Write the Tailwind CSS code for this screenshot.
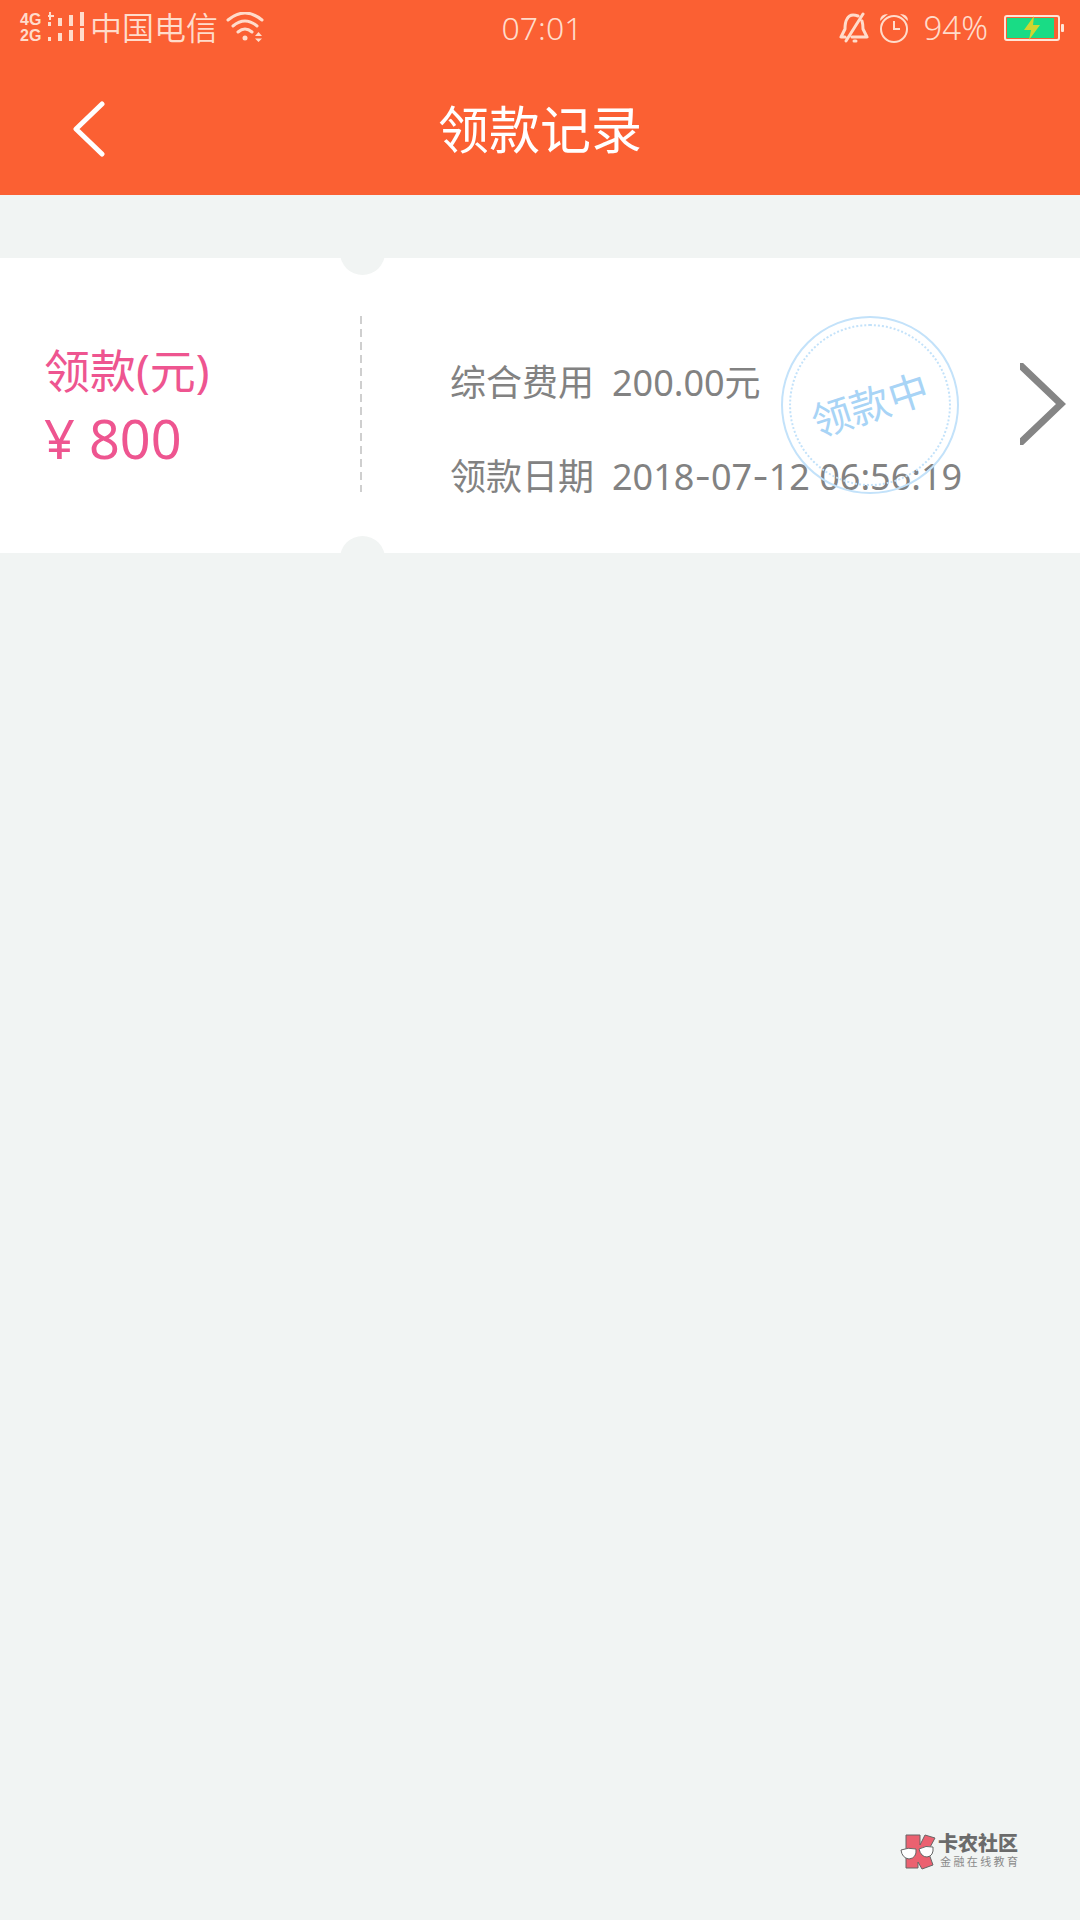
<!DOCTYPE html>
<html lang="zh-CN">
<head>
<meta charset="utf-8">
<meta name="viewport" content="width=device-width, initial-scale=1">
<title>领款记录</title>
<script src="https://cdn.jsdelivr.net/npm/@tailwindcss/browser@4"></script>
</head>
<body class="flex min-h-screen flex-col bg-[#f1f4f3] font-['Noto_Sans','Noto_Sans_CJK_SC',sans-serif]">
<header class="bg-[#fb6033] text-white">
  <!-- Status bar -->
  <div class="grid h-14 grid-cols-3 items-center pr-4 pl-5 font-[350] text-[#ffdccb]">
    <div class="flex items-center">
      <div class="flex w-7 flex-col font-['Liberation_Sans',sans-serif] text-base leading-4 font-bold">
        <span>4G</span><span>2G</span>
      </div>
      <svg class="h-8 w-9" viewBox="0 0 36 32" fill="currentColor" aria-hidden="true">
        <path d="M-2 3h3V0h2v3h3v2H3v3H1V5h-3zM-1 10h4v4h-4zM10 6h4v8h-4zM21 3h4v11h-4zM32 0h4v14h-4zM-1 25h4v4h-4zM10 21h4v8h-4zM21 18h4v11h-4zM32 16h4v13h-4z"/>
      </svg>
      <span class="ml-1.5 text-[32px] leading-10">中国电信</span>
      <svg class="ml-2 h-8 w-10" viewBox="0 0 40 32" fill="none" stroke="currentColor" stroke-width="3" stroke-linecap="round" aria-hidden="true">
        <path d="M2 8Q19-6 36 8M7 14Q19 4 31 14M12 20Q19 14 26 20"/>
        <circle cx="19" cy="26" r="2.500" fill="currentColor" stroke="none"/>
        <path d="M29 24l3.500-4 3.500 4zM29 26.500h7l-3.500 3.500z" fill="currentColor" stroke="none"/>
      </svg>
    </div>
    <time class="text-center text-[32px] leading-10">07:01</time>
    <div class="flex items-center justify-end">
      <svg class="h-8 w-8" viewBox="0 0 32 32" fill="none" stroke="currentColor" stroke-width="3" stroke-linecap="round" stroke-linejoin="round" aria-hidden="true">
        <path d="M20 4Q12 1 9 7Q7 10 7 17L3 25H7M24 9Q25 12 25 17L29 25H14M25 2L8 29M16 29h2"/>
      </svg>
      <svg class="ml-2 h-8 w-8" viewBox="0 0 32 32" fill="none" stroke="currentColor" stroke-width="2" aria-hidden="true">
        <circle cx="16" cy="17" r="13"/><path d="M16 9v8h6"/>
        <path d="M2 9Q2 2 10 2zM30 9Q30 2 22 2z" fill="currentColor" stroke="none"/>
      </svg>
      <span class="ml-3.5 text-[33px] leading-10">94%</span>
      <svg class="ml-4 h-7 w-[60px]" viewBox="0 0 60 28" aria-hidden="true">
        <rect x="1" y="2" width="54" height="24" rx="2" fill="none" stroke="#ffe6d8" stroke-width="2"/>
        <rect x="3" y="4" width="47" height="20" fill="#19dc85"/>
        <rect x="57" y="10" width="3" height="8" rx="1" fill="#ffe6d8"/>
        <path d="M30 2L20 16h7l-2 10 11-15h-7z" fill="#cfd531"/>
      </svg>
    </div>
  </div>
  <!-- Title bar -->
  <div class="grid h-[139px] grid-cols-[160px_1fr_160px] items-center pt-1.5">
    <button type="button" aria-label="返回" class="flex h-24 items-center pl-[72px]">
      <svg class="h-14 w-9" viewBox="0 0 36 56" fill="none" stroke="currentColor" stroke-width="5" stroke-linecap="round" stroke-linejoin="round"><path d="M30 3L4 28L30 53"/></svg>
    </button>
    <h1 class="text-center text-[51px] leading-16">领款记录</h1>
  </div>
</header>

<main class="pt-[63px]">
  <a href="#detail" class="relative grid h-[295px] grid-cols-[360px_1fr_60px] items-center overflow-hidden bg-white pb-1">
    <span class="absolute -top-7 left-[340px] size-[45px] rounded-full bg-[#f1f4f3]"></span>
    <span class="absolute -bottom-7 left-[340px] size-[45px] rounded-full bg-[#f1f4f3]"></span>
    <div class="pl-11 text-[#ee5590]">
      <p class="text-[46px] leading-[68px]">领款(元)</p>
      <p class="text-[54px] leading-[68px]">¥ 800</p>
    </div>
    <div class="flex items-center">
      <svg class="h-[178px] w-0.5 shrink-0" viewBox="0 0 2 178" aria-hidden="true"><path d="M1 1V177" stroke="#cfcfcf" stroke-width="2" stroke-dasharray="8 5"/></svg>
      <dl class="grid grid-cols-[auto_1fr] gap-x-[18px] pl-[88px] pt-[52px] text-4xl leading-[94px] whitespace-nowrap text-[#828282]">
        <dt>综合费用</dt><dd>200.00元</dd>
        <dt>领款日期</dt><dd>2018<span class="font-['Inter',sans-serif]">-</span>07<span class="font-['Inter',sans-serif]">-</span>12 06:56:19</dd>
      </dl>
    </div>
    <svg class="h-[82px] w-[46px]" viewBox="0 0 46 82" fill="none" stroke="#858585" stroke-width="7" aria-hidden="true"><path d="M-2 0L41 41L-2 82"/></svg>
    <!-- Status stamp -->
    <div class="absolute top-[58px] right-[121px] flex size-[178px] items-center justify-center rounded-full border-2 border-[#c3e2fa]">
      <span class="absolute inset-1.5 rounded-full border-2 border-dotted border-[#c3e2fa]"></span>
      <span class="-rotate-18 text-[40px] text-[#a8d4f6]">领款中</span>
    </div>
  </a>
</main>

<footer class="mt-auto flex justify-end pr-[62px] pb-[50px]">
  <div class="flex items-center gap-0.5">
    <svg class="h-9 w-9" viewBox="0 0 36 36" stroke="#666" stroke-width="1" aria-hidden="true">
      <path d="M6 1h14v10l5-10 10 3-7 13 5 14-11 4-4-7v6H6z" fill="#eb6170"/>
      <path d="M1 16q7-3 15-1q1 9-7 10q-7-1-8-9zM19 15q7-4 14-2q1 9-6 10q-6 0-8-8z" fill="#fff"/>
    </svg>
    <div class="flex flex-col">
      <span class="text-xl leading-5 font-black text-[#6b6b6b]">卡农社区</span>
      <span class="flex justify-between pl-0.5 text-[11px] leading-4 text-[#8a8a8a]"><span>金</span><span>融</span><span>在</span><span>线</span><span>教</span><span>育</span></span>
    </div>
  </div>
</footer>
</body>
</html>
